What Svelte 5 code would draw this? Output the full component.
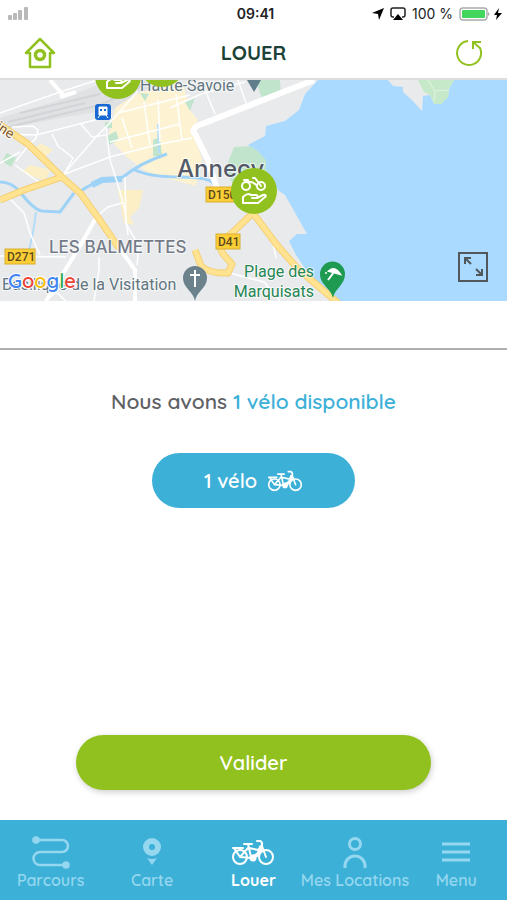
<script>
    let active = 'Louer';

    const tabs = ['Parcours', 'Carte', 'Louer', 'Mes Locations', 'Menu'];

    const streets = [
        'M0 33 L60 12 L110 -4',
        'M0 54 L36 55 L95 40 L112 36',
        'M12 47 L33 46 L38 50 L36 58 L28 66 L16 81',
        'M52 54 L58 66 L73 78 L62 98',
        'M62 96 L96 57 L106 47 L138 11',
        'M80 43 L92 57 L106 55',
        'M62 95 L110 77 L160 64 L192 58',
        'M106 47 L110 80 L118 105 L125 130 L128 155',
        'M110 62 L180 44',
        'M118 33 L190 15',
        'M122 38 L132 68',
        'M144 22 L150 65',
        'M158 20 L160 62',
        'M176 14 L182 60',
        'M0 83 L20 72',
        'M15 85 L40 103',
        'M10 119 L24 133 L30 153 L40 175',
        'M0 176 L66 177',
        'M125 97 L126 144 L139 166 L137 185',
        'M97 136 L108 127 L122 123',
        'M201 0 L215 34',
        'M238 0 L246 23',
        'M170 28 L201 14 L245 2',
        'M272 158 L276 178',
        'M230 193 L264 202 L280 221',
        'M99 177 L99 190 L94 221',
        'M46 221 L56 212 L66 221'
    ];
</script>

<svg class="defs" width="0" height="0" aria-hidden="true">
    <symbol id="bike" viewBox="0 0 44 27">
        <g fill="none" stroke="currentColor" stroke-width="2" stroke-linecap="round" stroke-linejoin="round">
            <circle cx="9" cy="18" r="7" />
            <circle cx="35" cy="18" r="7" />
            <path d="M2 9h10M3 9l6 9M9 18l8-9M13 5h8M17 5l3 13M9 18l12 1M26 2h3c3 1 2 3 2 5l4 11M18 9l9 2 4-4" />
            <path d="M30 8c-1 6-3 9-9 10" stroke-width="4" />
            <circle cx="22" cy="19" r="2" stroke-width="3" />
        </g>
    </symbol>
    <symbol id="rent" viewBox="0 0 46 46">
        <circle cx="23" cy="23" r="23" fill="#91c11e" />
        <g fill="none" stroke="#fff" stroke-width="2" stroke-linecap="round" stroke-linejoin="round">
            <circle cx="15" cy="18" r="4" />
            <circle cx="30" cy="18" r="4" />
            <path d="M13 12h4M16 14q6-1 9 3M30 18L24 10h-2" />
            <path d="M12 29c4-4 6-3 8-2h5c2 0 2 3 0 3h-4 5l6-3c2-1 4 1 2 2l-7 6H12z" />
        </g>
    </symbol>
</svg>

<div class="app">
    <div class="status">
        <svg width="20" height="13" viewBox="0 0 20 13" fill="#b9b9b9">
            <rect x="0" y="8" width="4" height="5" rx="1" />
            <rect x="5" y="6" width="4" height="7" rx="1" />
            <rect x="10" y="3" width="4" height="10" rx="1" />
            <rect x="16" y="0" width="4" height="13" rx="1" />
        </svg>
        <time>09:41</time>
        <div class="power">
            <svg width="12" height="12" viewBox="0 0 12 12"><path d="M12 0L7 12 6 6 0 5z" /></svg>
            <svg width="16" height="14" viewBox="0 0 16 14">
                <path d="M4 10H3Q1 10 1 8V3Q1 1 3 1H13Q15 1 15 3V8Q15 10 13 10H12" fill="none" stroke="#222" stroke-width="1.5" />
                <path d="M8 7l5 6H3z" />
            </svg>
            <span>100 %</span>
            <svg width="44" height="14" viewBox="0 0 44 14">
                <rect x="1" y="1" width="27" height="12" rx="3" fill="#fff" stroke="#aaa" stroke-width="1.4" />
                <rect x="3" y="3" width="23" height="8" rx="1" fill="#43d65c" />
                <path d="M29 5q3 2 0 4z" fill="#aaa" />
                <path d="M40 1l-5 7h3l-1 5 6-7h-4z" />
            </svg>
        </div>
    </div>

    <header>
        <button class="icon" aria-label="Accueil">
            <svg width="32" height="32" viewBox="0 0 32 32" fill="none" stroke="#91c11e">
                <path d="M16 2L2 16h4v14h20V16h4z" stroke-width="2.5" stroke-linejoin="round" />
                <circle cx="16" cy="18" r="4.5" stroke-width="3.5" />
            </svg>
        </button>
        <h1>LOUER</h1>
        <button class="icon" aria-label="Actualiser">
            <svg width="28" height="28" viewBox="0 0 28 28" fill="none" stroke="#91c11e" stroke-width="2">
                <path d="M13 2A12 12 0 1 0 25 9L18 3" />
                <path d="M18 10V3h8" />
            </svg>
        </button>
    </header>

    <section class="map" aria-label="Carte">
        <svg class="plan" viewBox="0 0 507 221" preserveAspectRatio="xMidYMid slice">
            <rect width="507" height="221" fill="#e9eaeb" />
            <path d="M0 38L60 20 110 0H160L125 27 60 38 0 50z" fill="#dfe1e3" />
            <path d="M8 42L85 23M0 49L100 25 150 2M20 33L100 14" fill="none" stroke="#d2d5d8" stroke-width="2" />
            <path d="M116 27L140 12 183 4 190 30 198 40 191 50 202 78 196 106 150 94 128 78 108 58z" fill="#fdf3d3" />
            <path d="M118 110H143L139 128 130 137 134 145 124 143zM40 63L53 70 45 77 34 70zM30 85L50 90 45 101 22 92z" fill="#fcefc5" />
            <path d="M2 81L7 73 16 78 11 87zM107 56L116 51 119 60 109 65zM153 60L160 57 162 76 153 76zM105 42h7v6h-7zM140 13l9 1-4 7zM185 22L195 18 190 31zM255 0H280L281 15 262 18z" fill="#c0e5cc" />
            <path d="M234 67L252 66 265 75 270 92 275 112 234 106 225 90z" fill="#c0e5cc" />

            <path d="M0 102Q12 102 20 112Q34 130 42 131L60 132 74 113M80 112Q92 101 123 97Q140 83 167 74M133 89Q148 97 180 97T214 105" fill="none" stroke="#9ed2f6" stroke-width="3" />
            <path d="M92 105L102 100 122 99" fill="none" stroke="#9ed2f6" stroke-width="6" />
            <path d="M36 132Q33 158 27 177M158 44L159 73" fill="none" stroke="#b5dcf7" stroke-width="2" />
            <path d="M318 0L305 14 299 30 285 41 266 46 265 56 248 65 258 71 266 80 266 90 275 104 283 120 290 133 307 154H297L289 161 296 175 306 190 319 204 338 221H507V0z" fill="#aadaff" />
            <path d="M267 103L285 115 307 154H297L270 125z" fill="#e9eaeb" />
            <path d="M388 0L393 6 403 7V12L412 20 422 31 423 16 430 15 434 24H441L448 17 449 9 454 0z" fill="#e9eaeb" />
            <path d="M418 0L424 12 430 15 434 24H441L448 17 449 9 454 0z" fill="#c6e9c9" />
            <path d="M428 0L435 11 434 21M435 11L449 10" fill="none" stroke="#e5f3e5" />

            <g fill="none" stroke="#fff">
                {#each streets as d}
                    <path {d} stroke-width="1.5" />
                {/each}
                <path d="M50 0L64 16M60 17L76 12" stroke-width="4" />
                <path d="M97 136L80 166 46 221M118 166L135 190V221" stroke-width="4" />
                <path d="M314 0L202 44Q190 48 195 54L208 80 217 109" stroke-width="6" />
            </g>

            <g fill="none" stroke-linejoin="round">
                <path d="M0 45L28 64 62 97 81 114 99 139 119 168M62 97L24 110 0 120M253 133L233 152Q216 164 223 174L232 184 228 193Q210 194 201 186L195 170M253 133L277 165 297 188 338 223" stroke="#f5cf74" stroke-width="7" />
                <path d="M0 45L28 64 62 97 81 114 99 139 119 168M62 97L24 110 0 120M253 133L233 152Q216 164 223 174L232 184 228 193Q210 194 201 186L195 170M253 133L277 165 297 188 338 223" stroke="#ffe391" stroke-width="5" />
            </g>

            <g class="road">
                <rect x="5" y="169" width="30" height="15" />
                <rect x="206" y="107" width="32" height="15" />
                <rect x="216" y="154" width="24" height="15" />
                <text x="7" y="181">D271</text>
                <text x="208" y="119">D150</text>
                <text x="218" y="166">D41</text>
            </g>

            <rect x="95" y="24" width="16" height="16" rx="3" fill="#1967d2" />
            <path d="M99 27h8v8h-8zM100 35l-2 3M106 35l2 3" fill="#fff" stroke="#fff" />
            <path d="M100 29h2v2h-2zM104 29h2v2h-2z" fill="#1967d2" />
            <path d="M247 0h14l-7 12z" fill="#607d8b" />

            <text class="place" x="140" y="11">Haute-Savoie</text>
            <text class="city" x="177" y="97">Annecy</text>
            <text class="district" x="49" y="173">LES BALMETTES</text>
            <text class="place" x="2" y="210">Basilique de la Visitation</text>
            <text class="brown" x="-15" y="42" transform="rotate(34 -15 42)">raine</text>
            <text class="beach" x="314" y="197">Plage des</text>
            <text class="beach" x="314" y="217">Marquisats</text>

            <path d="M195 221C193 211 183 208 183 198A12 12 0 0 1 207 198C207 208 197 211 195 221z" fill="#6b828d" />
            <path d="M195 190V207M190 195H200" stroke="#fff" stroke-width="2" />
            <path d="M333 218C331 208 320 205 320 194A12 12 0 0 1 345 194C345 205 335 208 333 218z" fill="#1e9b50" />
            <path d="M329 191Q335 186 340 194zM334 192L328 200" fill="#fff" stroke="#fff" stroke-width="2" />
            <circle cx="326" cy="193" r="1" fill="#fff" />

            <use href="#rent" x="139" y="-39" width="46" height="46" />
            <use href="#rent" x="95" y="-27" width="46" height="46" />
            <use href="#rent" x="231" y="88" width="46" height="46" />

            <text class="google" x="8" y="208"><tspan fill="#4285f4">G</tspan><tspan fill="#ea4335">o</tspan><tspan fill="#fbbc05">o</tspan><tspan fill="#4285f4">g</tspan><tspan fill="#34a853">l</tspan><tspan fill="#ea4335">e</tspan></text>
        </svg>
        <button class="expand" aria-label="Agrandir la carte">
            <svg width="30" height="30" viewBox="0 0 30 30" fill="none" stroke="#50585c" stroke-width="2">
                <rect x="1" y="1" width="28" height="28" />
                <path d="M7 12V6h6M7 6l6 6M18 23h6v-6M24 23l-6-6" />
            </svg>
        </button>
    </section>

    <div class="station"></div>

    <main>
        <p>Nous avons <strong>1 vélo disponible</strong></p>
        <button class="choice">
            1 vélo
            <svg width="36" height="22"><use href="#bike" /></svg>
        </button>
        <button class="submit">Valider</button>
    </main>

    <nav>
        {#each tabs as tab}
            <a href="#{tab}" class:active={tab === active} on:click|preventDefault={() => (active = tab)}>
                {#if tab === 'Parcours'}
                    <svg width="40" height="34" viewBox="0 0 40 34" fill="none" stroke="currentColor" stroke-width="2.5">
                        <path d="M5 4H31A6 6 0 0 1 31 16H9A6 6 0 0 0 9 29H34" />
                        <circle cx="5" cy="4" r="2.5" fill="currentColor" />
                        <circle cx="35" cy="29" r="2.5" fill="currentColor" />
                    </svg>
                {:else if tab === 'Carte'}
                    <svg width="20" height="34" viewBox="0 0 20 34">
                        <circle cx="10" cy="11" r="6" fill="none" stroke="currentColor" stroke-width="6" />
                        <path d="M5 22q5 2 10 0l-5 7z" fill="currentColor" />
                    </svg>
                {:else if tab === 'Louer'}
                    <svg width="44" height="34" viewBox="0 0 44 34"><use href="#bike" y="3" width="44" height="27" /></svg>
                {:else if tab === 'Mes Locations'}
                    <svg width="26" height="34" viewBox="0 0 26 34" fill="none" stroke="currentColor" stroke-width="3">
                        <circle cx="13" cy="8" r="5.5" />
                        <path d="M3 32v-2a10 10 0 0 1 20 0v2" />
                    </svg>
                {:else}
                    <svg width="28" height="34" viewBox="0 0 28 34" stroke="currentColor" stroke-width="3">
                        <path d="M0 8h28M0 16h28M0 24h28" />
                    </svg>
                {/if}
                <span>{tab}</span>
            </a>
        {/each}
    </nav>
</div>

<style>
    :global(body) {
        margin: 0;
        background: #fff;
    }

    .defs {
        position: absolute;
    }

    .app {
        display: flex;
        flex-direction: column;
        min-height: 100vh;
        font-family: Quicksand, Lato, sans-serif;
        color: #606164;
    }

    svg {
        display: block;
    }

    button {
        padding: 0;
        border: none;
        background: none;
        font-family: inherit;
        cursor: pointer;
    }

    .status,
    header {
        display: grid;
        grid-template-columns: 1fr auto 1fr;
        align-items: center;
    }

    .status {
        height: 27px;
        padding: 0 4px 0 8px;
        font: 14px Inter, sans-serif;
        color: #222;
    }

    time {
        font-weight: 600;
    }

    .power {
        display: flex;
        align-items: center;
        justify-content: flex-end;
        gap: 6px;
    }

    .power span {
        white-space: nowrap;
    }

    header {
        height: 51px;
        padding: 0 24px;
        border-bottom: 2px solid #ddd;
    }

    header .icon:last-child {
        justify-self: end;
    }

    .icon {
        justify-self: start;
    }

    h1 {
        margin: 0;
        font-size: 20px;
        font-weight: 700;
        color: #1c4238;
    }

    .map {
        position: relative;
    }

    .plan {
        width: 100%;
        height: auto;
    }

    .plan text {
        font-family: Roboto, sans-serif;
        paint-order: stroke;
        stroke: #fff;
        stroke-width: 2px;
        stroke-opacity: 0.7;
    }

    .plan .place {
        font-size: 16px;
        fill: #607580;
    }

    .plan .city {
        font-family: Inter, sans-serif;
        font-size: 24px;
        font-weight: 500;
        fill: #535968;
    }

    .plan .district {
        font-family: Inter, sans-serif;
        font-size: 17px;
        font-weight: 500;
        fill: #747b88;
    }

    .plan .beach {
        font-size: 16px;
        text-anchor: end;
        fill: #258653;
    }

    .plan .brown {
        font-size: 14px;
        fill: #80552d;
    }

    .road rect {
        fill: #fbce36;
        stroke: #d9ae35;
    }

    .plan .road text {
        font-size: 12px;
        font-weight: 500;
        stroke: none;
        fill: #5b4a1d;
    }

    .plan .google {
        font-family: Quicksand, Lato, sans-serif;
        font-size: 20px;
        font-weight: 600;
        stroke-opacity: 1;
    }

    .expand {
        position: absolute;
        right: 19px;
        bottom: 19px;
    }

    .station {
        height: 47px;
        border-bottom: 2px solid #b0b0b0;
    }

    main {
        display: flex;
        flex: 1;
        flex-direction: column;
        align-items: center;
        padding: 38px 0 30px;
    }

    p {
        margin: 0 0 38px;
        font-size: 21px;
        font-weight: 600;
        line-height: 27px;
    }

    strong {
        font-weight: 600;
        color: #3db0d8;
    }

    .choice,
    .submit {
        display: flex;
        align-items: center;
        justify-content: center;
        height: 55px;
        border-radius: 28px;
        font-size: 20px;
        font-weight: 600;
        color: #fff;
    }

    .choice {
        gap: 10px;
        width: 40%;
        background: #3db0d8;
    }

    .submit {
        width: 70%;
        margin-top: auto;
        background: #91c11e;
        box-shadow: 1px 2px 6px rgba(0, 0, 0, 0.2);
    }

    nav {
        display: grid;
        grid-template-columns: repeat(5, minmax(0, 1fr));
        height: 80px;
        background: #3db0d8;
    }

    nav a {
        display: flex;
        flex-direction: column;
        align-items: center;
        padding-top: 16px;
        font-size: 16px;
        font-weight: 600;
        line-height: 20px;
        white-space: nowrap;
        text-decoration: none;
        color: #94d7ef;
    }

    nav a.active {
        font-weight: 700;
        color: #fff;
    }
</style>
